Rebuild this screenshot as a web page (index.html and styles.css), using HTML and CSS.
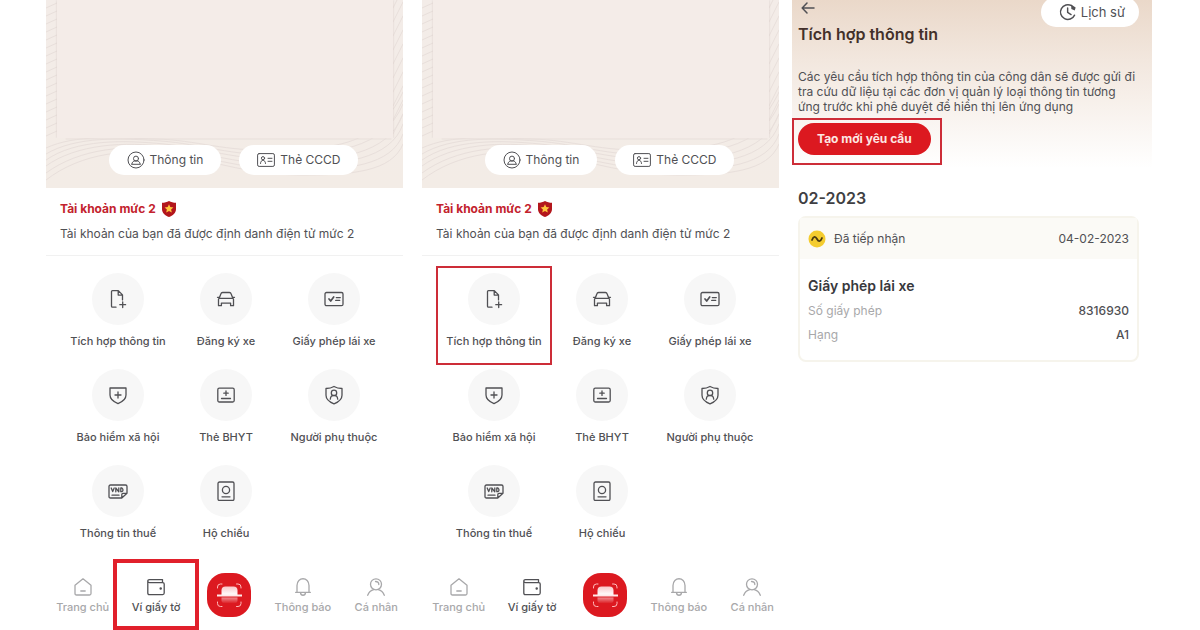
FILE: index.html
```html
<!DOCTYPE html>
<html lang="vi">
<head>
<meta charset="utf-8">
<title>Tích hợp thông tin</title>
<link rel="stylesheet" href="styles.css">
</head>
<body>
<svg class="sprite" aria-hidden="true">
  <symbol id="waves" viewBox="0 0 357 188" preserveAspectRatio="none">
    <path d="M0 8l11-5M0 16l11-5M0 24l11-5M0 32l11-5M0 40l11-5M0 48l11-5M0 56l11-5M0 64l11-5M0 72l11-5M0 80l11-5M0 88l11-5M0 96l11-5M0 104l11-5M0 112l11-5M0 120l11-5M0 128l11-5M0 136l11-5"/>
    <path d="M0 148C30 134 70 138 110 139S180 152 230 150 330 150 357 92M0 154C30 136 75 138 115 141S185 156 235 155 338 150 357 104M0 160C30 139 78 140 118 144S190 160 240 160 342 156 357 114M0 166C30 144 80 141 120 147S195 165 245 165 345 160 357 124M0 173C34 148 82 144 124 151S200 170 250 170 346 166 357 134M0 180C36 152 84 148 128 155S205 175 255 175 346 172 357 144M20 139h325"/>
    <path d="M347 8l10-20M347 22l10-20M347 36l10-20M347 50l10-20M347 64l10-20M347 78l10-20M347 92l10-20M347 106l10-20M347 120l10-20M347 134l10-20"/>
  </symbol>
  <symbol id="user-circle" viewBox="0 0 18 18"><circle cx="9" cy="9" r="8"/><circle cx="9" cy="7.6" r="2.5"/><path d="M4.8 13c.4-2 1.6-3 3.1-3.1h2.2c1.500.1 2.700 1.100 3.100 3.100M4.800 13.300h8.400"/></symbol>
  <symbol id="id-card" viewBox="0 0 18 14"><rect x=".6" y=".6" width="16.800" height="12.800" rx="1.500"/><circle cx="6" cy="5.200" r="1.600"/><path d="M3.500 10.500c0-4.400 5-4.400 5 0M11 5.300h4M11 8.300h4"/></symbol>
  <symbol id="badge" viewBox="0 0 16 16"><path fill="#b3161c" d="M8 0c2 1.300 4.500 1.700 7 1.800v6.400c0 3.800-3.200 6.300-7 7.800-3.800-1.500-7-4-7-7.800V1.800C3.500 1.700 6 1.300 8 0z"/><path fill="#ffc53d" d="M8 3.200l1.300 2.900 3.100.3-2.300 2.100.7 3.100L8 10l-2.800 1.600.7-3.100-2.300-2.100 3.100-.3z"/></symbol>
  <symbol id="file-plus" viewBox="0 0 20 20"><path d="M8 18.200H4.500a1 1 0 0 1-1-1V2.600a1 1 0 0 1 1-1h5.800l4.200 4.300v5M10.200 1.800v4.300h4.200M14.700 12.800v5.800M11.800 15.700h5.800"/></symbol>
  <symbol id="car" viewBox="0 0 20 20"><path d="M3.200 9.300l1.700-4.500q.4-1.300 1.700-1.300h6.800q1.300 0 1.700 1.300l1.700 4.500M1.500 8.300h1.500M17 8.300h1.500M3.500 9.300h13q1 0 1 1v6.400h-2.900v-2.600H5.400v2.600H2.500v-6.400q0-1 1-1z"/></symbol>
  <symbol id="licence" viewBox="0 0 20 20"><rect x="1" y="3.500" width="18" height="13.200" rx="1.500"/><path d="M5 10l1.700 2 3-4" stroke-width="1.700"/><path d="M12.300 8.600h4M11.700 11.400h4"/></symbol>
  <symbol id="shield-plus" viewBox="0 0 20 20"><path d="M2 3h16v7c0 4-3.500 6.800-8 8.600C5.500 16.800 2 14 2 10zM10 7v6M7 10h6"/></symbol>
  <symbol id="health-card" viewBox="0 0 20 20"><rect x="1.800" y="3.200" width="16.400" height="13.800" rx="1.500"/><path d="M10 6v4.400M7.800 8.200h4.400M5.500 13.500h9"/></symbol>
  <symbol id="shield-user" viewBox="0 0 20 20"><path d="M10 1.500c2.300 1.400 5 2 8 2v6.700c0 4-3.500 6.800-8 8.600-4.500-1.800-8-4.600-8-8.600V3.500c3 0 5.700-.6 8-2z"/><circle cx="10" cy="7.900" r="2.700"/><path d="M6.300 14.200c.3-5 7.100-5 7.400 0"/></symbol>
  <symbol id="tax" viewBox="0 0 20 20"><path d="M13.800 17H2.500q-1.500 0-1.500-1.500v-10Q1 4 2.500 4h15Q19 4 19 5.500v6.800zM13.800 17v-3.500q0-1.200 1.200-1.200h4M4 14.200h7"/><path d="M3.200 7l1.500 3.600L6.200 7M7.800 10.800V7l3 3.800V7M12.800 7v3.700h1.100q2.200-1.800 0-3.700z"/></symbol>
  <symbol id="passport" viewBox="0 0 20 20"><rect x="2" y="1" width="16" height="18.500" rx="1.500"/><circle cx="10" cy="9" r="3.600"/><path d="M6 15.800h8"/></symbol>
  <symbol id="home" viewBox="0 0 20 20"><path d="M2 8.300L10 1.800l8 6.500v8.200q0 1.500-1.500 1.500h-13Q2 18 2 16.500zM7.800 14h4.400"/></symbol>
  <symbol id="wallet" viewBox="0 0 20 20"><path d="M16.500 5.600V2.600H3.500Q1.800 2.600 1.800 4.100T3.500 5.600h13.200q1.500 0 1.500 1.500v9q0 1.500-1.500 1.500H3.300q-1.500 0-1.500-1.500v-12"/><circle cx="14.700" cy="11.600" r=".6" fill="currentColor"/></symbol>
  <symbol id="bell" viewBox="0 0 20 20"><path d="M4 15V8.500c0-9 12-9 12 0V15M2.600 15.300h14.800M7.500 15.600c.3 3.500 4.700 3.500 5 0"/></symbol>
  <symbol id="person" viewBox="0 0 20 20"><circle cx="10" cy="7.300" r="5.500"/><path d="M1.700 18.300c1.200-3.200 3.200-5 6-5.600M12.300 12.700c2.800.6 4.800 2.400 6 5.600M9.500 4.500c2.200 0 3.300 1.200 3.300 3"/></symbol>
  <symbol id="scan" viewBox="0 0 44 44"><path fill="none" stroke="#fbb" d="M10.500 15v-1q0-3 3-3h1.500M29.500 11H31q3 0 3 3v1M34 29v1.500q0 3-3 3h-1.500M15 33.500h-1.500q-3 0-3-3V29"/><path fill="url(#fade-top)" d="M14.500 22v-4.500q0-4 4-4h8q4 0 4 4V22z"/><path fill="#ffe9e9" d="M10 21.500h25v2H10z"/><path fill="url(#fade-bottom)" d="M14.500 24.500h16v3q0 3-4 3h-8q-4 0-4-3z"/></symbol>
  <linearGradient id="fade-top" x2="0" y2="1"><stop stop-color="#f9c6c8"/><stop offset="1" stop-color="#fff"/></linearGradient>
  <linearGradient id="fade-bottom" x2="0" y2="1"><stop stop-color="#f08a8e"/><stop offset="1" stop-color="#dc1c22"/></linearGradient>
  <symbol id="back" viewBox="0 0 14 12"><path d="M6 1L1.200 6 6 11M1.500 6H13"/></symbol>
  <symbol id="history" viewBox="0 0 20 20"><path d="M17.300 13.500A8.200 8.200 0 1 1 14 3M9.600 5.500v5l3.800 2.300"/><path d="M13.500 1.800l5 3.200-1 3.200-3.800-1.400z" fill="currentColor" stroke="none"/></symbol>
</svg>

<main class="board">
  <div class="wallets">
    <section class="panel">
      <div class="hero">
        <svg class="waves" aria-hidden="true"><use href="#waves"/></svg>
        <div class="id-area"></div>
        <div class="hero-actions">
          <button class="pill"><svg class="icon-18"><use href="#user-circle"/></svg>Thông tin</button>
          <button class="pill"><svg class="icon-card"><use href="#id-card"/></svg>Thẻ CCCD</button>
        </div>
      </div>
      <div class="account">
        <h2 class="account-title">Tài khoản mức 2 <svg class="badge"><use href="#badge"/></svg></h2>
        <p class="account-text">Tài khoản của bạn đã được định danh điện tử mức 2</p>
      </div>
      <div class="services">
        <button class="service"><span class="disc"><svg><use href="#file-plus"/></svg></span>Tích hợp thông tin</button>
        <button class="service"><span class="disc"><svg><use href="#car"/></svg></span>Đăng ký xe</button>
        <button class="service"><span class="disc"><svg><use href="#licence"/></svg></span>Giấy phép lái xe</button>
        <button class="service"><span class="disc"><svg><use href="#shield-plus"/></svg></span>Bảo hiểm xã hội</button>
        <button class="service"><span class="disc"><svg><use href="#health-card"/></svg></span>Thẻ BHYT</button>
        <button class="service"><span class="disc"><svg><use href="#shield-user"/></svg></span>Người phụ thuộc</button>
        <button class="service"><span class="disc"><svg><use href="#tax"/></svg></span>Thông tin thuế</button>
        <button class="service"><span class="disc"><svg><use href="#passport"/></svg></span>Hộ chiếu</button>
      </div>
      <nav class="tabs">
        <a class="tab" href="#"><svg><use href="#home"/></svg>Trang chủ</a>
        <a class="tab tab-active tab-marked" href="#"><svg><use href="#wallet"/></svg>Ví giấy tờ</a>
        <button class="scan" aria-label="Quét mã"><svg><use href="#scan"/></svg></button>
        <a class="tab" href="#"><svg><use href="#bell"/></svg>Thông báo</a>
        <a class="tab" href="#"><svg><use href="#person"/></svg>Cá nhân</a>
      </nav>
    </section>

    <section class="panel">
      <div class="hero">
        <svg class="waves" aria-hidden="true"><use href="#waves"/></svg>
        <div class="id-area"></div>
        <div class="hero-actions">
          <button class="pill"><svg class="icon-18"><use href="#user-circle"/></svg>Thông tin</button>
          <button class="pill"><svg class="icon-card"><use href="#id-card"/></svg>Thẻ CCCD</button>
        </div>
      </div>
      <div class="account">
        <h2 class="account-title">Tài khoản mức 2 <svg class="badge"><use href="#badge"/></svg></h2>
        <p class="account-text">Tài khoản của bạn đã được định danh điện tử mức 2</p>
      </div>
      <div class="services">
        <button class="service service-marked"><span class="disc"><svg><use href="#file-plus"/></svg></span>Tích hợp thông tin</button>
        <button class="service"><span class="disc"><svg><use href="#car"/></svg></span>Đăng ký xe</button>
        <button class="service"><span class="disc"><svg><use href="#licence"/></svg></span>Giấy phép lái xe</button>
        <button class="service"><span class="disc"><svg><use href="#shield-plus"/></svg></span>Bảo hiểm xã hội</button>
        <button class="service"><span class="disc"><svg><use href="#health-card"/></svg></span>Thẻ BHYT</button>
        <button class="service"><span class="disc"><svg><use href="#shield-user"/></svg></span>Người phụ thuộc</button>
        <button class="service"><span class="disc"><svg><use href="#tax"/></svg></span>Thông tin thuế</button>
        <button class="service"><span class="disc"><svg><use href="#passport"/></svg></span>Hộ chiếu</button>
      </div>
      <nav class="tabs">
        <a class="tab" href="#"><svg><use href="#home"/></svg>Trang chủ</a>
        <a class="tab tab-active" href="#"><svg><use href="#wallet"/></svg>Ví giấy tờ</a>
        <button class="scan" aria-label="Quét mã"><svg><use href="#scan"/></svg></button>
        <a class="tab" href="#"><svg><use href="#bell"/></svg>Thông báo</a>
        <a class="tab" href="#"><svg><use href="#person"/></svg>Cá nhân</a>
      </nav>
    </section>
  </div>

  <section class="detail">
    <div class="detail-bar">
      <button class="back" aria-label="Quay lại"><svg><use href="#back"/></svg></button>
      <button class="history"><svg class="icon-18"><use href="#history"/></svg>Lịch sử</button>
    </div>
    <h1 class="detail-title">Tích hợp thông tin</h1>
    <p class="detail-text">Các yêu cầu tích hợp thông tin của công dân sẽ được gửi đi tra cứu dữ liệu tại các đơn vị quản lý loại thông tin tương ứng trước khi phê duyệt để hiển thị lên ứng dụng</p>
    <div class="create-mark"><button class="create">Tạo mới yêu cầu</button></div>
    <h2 class="month">02-2023</h2>
    <article class="request">
      <header class="request-head">
        <svg class="status" viewBox="0 0 18 18" aria-hidden="true"><circle cx="9" cy="9" r="8.500" fill="#f4cc2f"/><path d="M4 10c1.500-4 3.500-3.800 5-1s3.500 3 5-1" fill="none" stroke="#4a3a10" stroke-width="1.800" stroke-linecap="round"/></svg>
        <span>Đã tiếp nhận</span>
        <time class="request-date">04-02-2023</time>
      </header>
      <div class="request-body">
        <h3 class="request-title">Giấy phép lái xe</h3>
        <dl class="facts">
          <dt>Số giấy phép</dt><dd>8316930</dd>
          <dt>Hạng</dt><dd>A1</dd>
        </dl>
      </div>
    </article>
  </section>
</main>
</body>
</html>
```

FILE: styles.css
```css
* { box-sizing: border-box; }

body {
  min-height: 100vh;
  margin: 0;
  background: #fff;
  color: #505054;
  font: 12px/16px Inter, "Liberation Sans", sans-serif;
  overflow: hidden;
}

h1, h2, h3, p, dl, dd { margin: 0; }

button {
  padding: 0;
  border: 0;
  background: none;
  color: inherit;
  font: inherit;
}

a { color: inherit; text-decoration: none; }

svg {
  flex: none;
  fill: none;
  stroke: currentColor;
  stroke-linecap: round;
  stroke-linejoin: round;
}

.sprite { position: absolute; width: 0; height: 0; }
.icon-18 { width: 18px; height: 18px; }
.icon-card { width: 18px; height: 14px; }

.board {
  display: grid;
  grid-template-columns: 733fr 360fr;
  column-gap: 13px;
  align-items: start;
  padding: 0 48px 0 46px;
}

.wallets {
  display: grid;
  grid-template-columns: 1fr 1fr;
  column-gap: 19px;
}

/* Identity header */
.hero {
  position: relative;
  padding: 0 10px 13px 11px;
  background: linear-gradient(#f3ece8, #f3ece6);
}

.waves {
  position: absolute;
  inset: 0;
  width: 100%;
  height: 100%;
  stroke: #e8dfdb;
}

.id-area {
  position: relative;
  height: 138px;
  background: #f4ece8;
  box-shadow: 0 0 2px #d8cecb;
  clip-path: inset(0 -3px 0 -3px);
}

.hero-actions {
  position: relative;
  display: flex;
  gap: 18px;
  justify-content: center;
  padding: 7px 0 0 17px;
}

.pill, .history {
  display: flex;
  align-items: center;
  gap: 5px;
  height: 30px;
  padding: 0 18px;
  border-radius: 15px;
  background: #fff;
  white-space: nowrap;
}

/* Account level */
.account {
  padding: 13px 14px;
  border-bottom: 1px solid #f1f1f1;
  white-space: nowrap;
}

.account-title {
  display: flex;
  align-items: center;
  gap: 5px;
  color: #c3222d;
  font-size: 12px;
  line-height: 16px;
  font-weight: 700;
}

.badge { width: 16px; height: 16px; stroke: none; }
.account-text { margin-top: 9px; }

/* Services */
.services {
  display: grid;
  grid-template-columns: repeat(3, 1fr);
  row-gap: 20px;
  padding: 17px 15px 0 18px;
}

.service {
  position: relative;
  display: flex;
  flex-direction: column;
  align-items: center;
  gap: 8px;
  font-size: 11px;
  font-weight: 500;
  white-space: nowrap;
}

.disc {
  display: grid;
  place-items: center;
  width: 52px;
  height: 52px;
  border-radius: 50%;
  background: #f7f7f7;
}

.disc svg, .tab svg { width: 20px; height: 20px; stroke-width: 1.3; }

.service-marked::after {
  content: "";
  position: absolute;
  inset: -7px -4px -16px;
  border: 2px solid #cd2d38;
}

/* Tab bar */
.tabs {
  display: grid;
  grid-template-columns: repeat(5, 1fr);
  align-items: start;
  margin: 32px -10px 0 0;
}

.tab {
  position: relative;
  display: flex;
  flex-direction: column;
  align-items: center;
  gap: 2px;
  padding-top: 4px;
  color: #a8a8aa;
  font-size: 11px;
  font-weight: 500;
  white-space: nowrap;
}

.tab-active { color: #505054; }

.tab-marked::after {
  content: "";
  position: absolute;
  inset: -14px -6px -15px;
  border: 4px solid #e1202b;
}

.scan {
  justify-self: center;
  width: 44px;
  height: 44px;
  border-radius: 18px;
  background: #dc1920;
}

.scan svg { display: block; width: 44px; height: 44px; stroke: none; }

/* Request list */
.detail {
  padding: 0 13px 0 6px;
  background: linear-gradient(#ead8c9, #f2e7de 60px, #fff 168px);
}

.detail-bar { display: flex; justify-content: space-between; height: 24px; }
.back { align-self: flex-start; padding: 2px 3px; }
.back svg { display: block; width: 14px; height: 12px; stroke-width: 1.5; }
.history { margin-top: -3px; padding: 0 14px 0 18px; font-size: 13px; gap: 4px; }
.history svg { stroke-width: 1.6; }

.detail-title {
  color: #43302a;
  font-size: 16px;
  line-height: 20px;
  font-weight: 600;
}

.detail-text { margin-top: 25px; line-height: 15px; }

.create-mark {
  width: fit-content;
  margin: 4px 0 0 -6px;
  padding: 3px 9px 8px 4px;
  border: 2px solid #cd2d38;
}

.create {
  display: block;
  height: 32px;
  padding: 0 19px;
  border-radius: 16px;
  background: #dc1920;
  color: #fde7e2;
  font-weight: 700;
}

.month {
  margin: 23px 0 8px;
  color: #3f3f43;
  font-size: 16px;
  line-height: 20px;
  font-weight: 600;
}

.request {
  border: 2px solid #f6f4ec;
  border-radius: 8px;
  background: #fff;
}

.request-head {
  display: flex;
  align-items: center;
  gap: 8px;
  height: 41px;
  padding: 0 8px;
  background: #fbfaf6;
}

.status { width: 18px; height: 18px; stroke: none; }
.request-date { margin-left: auto; }
.request-body { padding: 17px 8px; }

.request-title {
  color: #38383c;
  font-size: 14px;
  line-height: 20px;
  font-weight: 600;
}

.facts {
  display: grid;
  grid-template-columns: 1fr auto;
  row-gap: 8px;
  margin-top: 7px;
}

.facts dt { color: #a8a8aa; }
.facts dd { font-weight: 500; text-align: right; }
```
